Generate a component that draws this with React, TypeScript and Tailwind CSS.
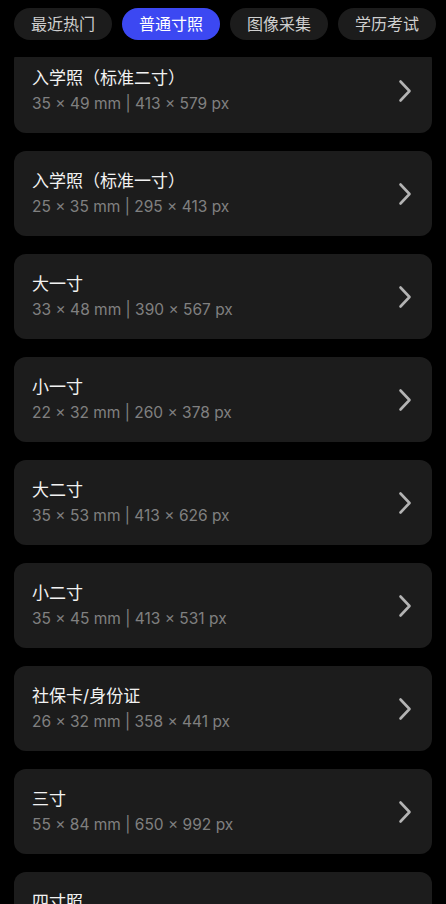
const tabs = ["最近热门", "普通寸照", "图像采集", "学历考试"];

const sizes = [
  { name: "入学照（标准二寸）", spec: "35 × 49 mm | 413 × 579 px" },
  { name: "入学照（标准一寸）", spec: "25 × 35 mm | 295 × 413 px" },
  { name: "大一寸", spec: "33 × 48 mm | 390 × 567 px" },
  { name: "小一寸", spec: "22 × 32 mm | 260 × 378 px" },
  { name: "大二寸", spec: "35 × 53 mm | 413 × 626 px" },
  { name: "小二寸", spec: "35 × 45 mm | 413 × 531 px" },
  { name: "社保卡/身份证", spec: "26 × 32 mm | 358 × 441 px" },
  { name: "三寸", spec: "55 × 84 mm | 650 × 992 px" },
  { name: "四寸照", spec: "76 × 102 mm | 898 × 1205 px" },
];

function Chevron() {
  return (
    <svg width="14" height="24" viewBox="0 0 14 24" fill="none" className="shrink-0">
      <path
        d="M2.5 2.5 L11.5 12 L2.5 21.5"
        stroke="#b3b3b3"
        strokeWidth="2.6"
        strokeLinecap="round"
        strokeLinejoin="round"
      />
    </svg>
  );
}

export default function App() {
  const active = 1;

  return (
    <div
      className="flex h-[904px] w-[446px] flex-col overflow-hidden bg-black"
      style={{ fontFamily: '"Inter", "Noto Sans CJK SC", sans-serif' }}
    >
      <div className="flex h-[57px] shrink-0 gap-[10px] overflow-hidden pl-[14px] pt-[8px]">
        {tabs.map((tab, i) => (
          <div
            key={tab}
            className={`flex h-[32px] shrink-0 items-center rounded-full px-[17px] text-[16px] ${
              i === active ? "bg-[#3c48f2] text-white" : "bg-[#1c1c1c] text-[#cfcfcf]"
            }`}
          >
            {tab}
          </div>
        ))}
      </div>

      <div className="flex-1 overflow-hidden">
        <div className="-mt-[9px] flex flex-col gap-[18px] px-[14px]">
          {sizes.map((s) => (
            <div
              key={s.name}
              className="flex h-[85px] shrink-0 items-center justify-between rounded-[12px] bg-[#1c1c1c] pl-[18px] pr-[20px]"
            >
              <div className="flex flex-col">
                <p className="text-[17px] leading-[24px] text-[#f2f2f2]">{s.name}</p>
                <p className="mt-[3px] text-[15.5px] leading-[22px] text-[#808080]">{s.spec}</p>
              </div>
              <Chevron />
            </div>
          ))}
        </div>
      </div>
    </div>
  );
}
